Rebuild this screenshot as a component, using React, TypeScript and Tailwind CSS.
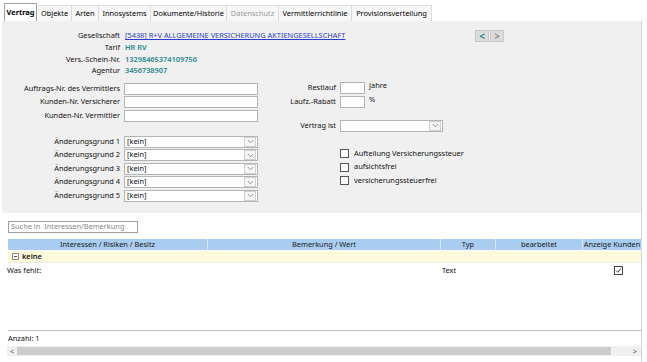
import React from "react";

const tabs = [
  { t: "Vertrag", w: 33, sel: true },
  { t: "Objekte", w: 34 },
  { t: "Arten", w: 27 },
  { t: "Innosystems", w: 52 },
  { t: "Dokumente/Historie", w: 76 },
  { t: "Datenschutz", w: 52, dis: true },
  { t: "Vermittlerrichtlinie", w: 73 },
  { t: "Provisionsverteilung", w: 80 },
];

const cols: [string, number][] = [
  ["Interessen / Risiken / Besitz", 200],
  ["Bemerkung / Wert", 233],
  ["Typ", 55],
  ["bearbeitet", 87],
  ["Anzeige Kunden", 59],
];

function Chevron() {
  return (
    <div className="w-[12px] h-[10px] border border-[#d0d0d0] bg-[#f6f6f6] flex items-center justify-center mr-[1px]">
      <svg width="7" height="5" viewBox="0 0 7 5">
        <path d="M0.8 1 L3.5 3.8 L6.2 1" fill="none" stroke="#8a8a8a" strokeWidth="0.9" />
      </svg>
    </div>
  );
}

function Select({ w, value }: { w: number; value?: string }) {
  return (
    <div
      className="h-[12px] bg-white border border-[#b4b4b4] flex items-center justify-between"
      style={{ width: w }}
    >
      <span className="pl-[2px] leading-none">{value ?? ""}</span>
      <Chevron />
    </div>
  );
}

function Input({ w }: { w: number }) {
  return <div className="h-[12px] bg-white border border-[#b4b4b4]" style={{ width: w }} />;
}

function Check() {
  return <div className="w-[9px] h-[9px] border border-[#555] bg-white shrink-0" />;
}

export default function App() {
  return (
    <div
      className="w-[647px] h-[362px] bg-white overflow-hidden text-[7.4px] text-[#111] leading-none"
      style={{ fontFamily: '"Noto Sans", "Open Sans", sans-serif' }}
    >
      {/* Tabs */}
      <div className="flex pl-[4px] pt-[3px] h-[21px] items-end">
        {tabs.map((tb) => (
          <div
            key={tb.t}
            className={
              tb.sel
                ? "h-[18px] bg-white border border-[#a0a0a0] border-b-0 flex items-center justify-center font-bold text-black mr-[1px] whitespace-nowrap"
                : "h-[16px] bg-[#f7f7f7] border-r border-t border-[#dcdcdc] flex items-center justify-center whitespace-nowrap " +
                  (tb.dis ? "text-[#9a9a9a]" : "text-black")
            }
            style={{ width: tb.w }}
          >
            {tb.t}
          </div>
        ))}
      </div>

      <div className="mx-[2px] w-[640px] border-r border-[#d4d4d4] h-[341px] flex flex-col">
        {/* Gray form panel */}
        <div className="bg-[#f0f0f0] h-[192px] shrink-0 flex flex-col pt-[9px]">
          <div className="flex">
            <div className="flex flex-col gap-[0.5px] w-[470px]">
              {[
                ["Gesellschaft", "link"],
                ["Tarif", "HR RV"],
                ["Vers.-Schein-Nr.", "13298465374109756"],
                ["Agentur", "3456738907"],
              ].map(([l, v]) => (
                <div key={l} className="flex items-center h-[11.3px]">
                  <div className="w-[118px] text-right">{l}</div>
                  <div className="ml-[5px]">
                    {v === "link" ? (
                      <span className="text-[#2a3ccf] underline">
                        [5438] R+V ALLGEMEINE VERSICHERUNG AKTIENGESELLSCHAFT
                      </span>
                    ) : (
                      <span className="text-[#1f8a8f] font-semibold">{v}</span>
                    )}
                  </div>
                </div>
              ))}
            </div>
            <div className="flex gap-[1px] ml-[3px]">
              <div className="w-[14px] h-[12px] bg-[#dcdcdc] border border-[#c8c8c8] flex items-center justify-center text-[#1d8a8a] font-bold text-[10px]">
                &lt;
              </div>
              <div className="w-[14px] h-[12px] bg-[#dcdcdc] border border-[#c8c8c8] flex items-center justify-center text-[#8a8a8a] font-bold text-[10px]">
                &gt;
              </div>
            </div>
          </div>

          <div className="flex mt-[6px]">
            {/* left column */}
            <div className="flex flex-col w-[278px]">
              <div className="flex flex-col gap-[1.5px]">
                {["Auftrags-Nr. des Vermittlers", "Kunden-Nr. Versicherer", "Kunden-Nr. Vermittler"].map((l) => (
                  <div key={l} className="flex items-center h-[12px]">
                    <div className="w-[118px] text-right">{l}</div>
                    <div className="ml-[4px]">
                      <Input w={134} />
                    </div>
                  </div>
                ))}
              </div>
              <div className="flex flex-col gap-[1.5px] mt-[14px]">
                {[1, 2, 3, 4, 5].map((n) => (
                  <div key={n} className="flex items-center h-[12px]">
                    <div className="w-[118px] text-right">Änderungsgrund {n}</div>
                    <div className="ml-[4px]">
                      <Select w={134} value="[kein]" />
                    </div>
                  </div>
                ))}
              </div>
            </div>
            {/* right column */}
            <div className="flex flex-col">
              <div className="flex flex-col gap-[2px] -mt-[1px]">
                {[
                  ["Restlauf", "Jahre"],
                  ["Laufz.-Rabatt", "%"],
                ].map(([l, s]) => (
                  <div key={l} className="flex items-center h-[12px]">
                    <div className="w-[56px] text-right">{l}</div>
                    <div className="ml-[4px]">
                      <Input w={25} />
                    </div>
                    <div className="ml-[4px] -mt-[3px]">{s}</div>
                  </div>
                ))}
              </div>
              <div className="flex items-center h-[12px] mt-[12px]">
                <div className="w-[56px] text-right">Vertrag ist</div>
                <div className="ml-[4px]">
                  <Select w={103} />
                </div>
              </div>
              <div className="flex flex-col gap-[3.5px] mt-[17px] ml-[60px]">
                {["Aufteilung Versicherungssteuer", "aufsichtsfrei", "versicherungssteuerfrei"].map((l) => (
                  <div key={l} className="flex items-center h-[10px] gap-[5px]">
                    <Check />
                    <span>{l}</span>
                  </div>
                ))}
              </div>
            </div>
          </div>
        </div>

        {/* White list area */}
        <div className="flex-1 flex flex-col bg-white">
          <div className="mt-[8px] ml-[6px] w-[130px] h-[12px] border border-[#a0a0a0] flex items-center pl-[2px] text-[#8a8a8a] shrink-0">
            Suche in&nbsp; Interessen/Bemerkung
          </div>
          <div className="mt-[6px] ml-[6px] flex flex-col border-b border-[#bdbdbd] h-[92px] shrink-0">
            <div className="flex h-[11px] bg-[#a9cdf0] shrink-0">
              {cols.map(([t, w]) => (
                <div
                  key={t}
                  className="h-full shrink-0 flex items-center justify-center border-r border-[#d8e8f8] whitespace-nowrap overflow-hidden text-[#1a1a1a]"
                  style={{ width: w }}
                >
                  {t}
                </div>
              ))}
            </div>
            <div className="flex items-center h-[12px] bg-[#fefbdc] mt-[1px] pl-[4px] gap-[3px] border-b border-[#eeeee0] shrink-0">
              <div className="w-[7px] h-[7px] border border-[#8a8a8a] flex items-center justify-center bg-white">
                <div className="w-[3px] h-[1px] bg-[#555]" />
              </div>
              <span className="font-semibold">keine</span>
            </div>
            <div className="flex items-center h-[13px] mt-[1px] shrink-0">
              <div className="shrink-0 -ml-[1px]" style={{ width: 200 }}>Was fehlt:</div>
              <div className="shrink-0" style={{ width: 233 }} />
              <div className="shrink-0 pl-[2px]" style={{ width: 55 }}>Text</div>
              <div className="shrink-0" style={{ width: 87 }} />
              <div className="shrink-0 flex justify-center pl-[14px]" style={{ width: 58 }}>
                <svg width="9" height="9" viewBox="0 0 9 9">
                  <rect x="0.5" y="0.5" width="8" height="8" fill="white" stroke="#444" />
                  <path d="M2 4.5 L3.8 6.3 L7 2.5" fill="none" stroke="#222" strokeWidth="0.9" />
                </svg>
              </div>
            </div>
          </div>
          <div className="ml-[6px] mt-[4px]">Anzahl: 1</div>
          <div className="ml-[5px] mt-[4px] h-[10px] flex items-center bg-[#f0f0f0] shrink-0">
            <div className="w-[10px] text-center text-[#555]">&lt;</div>
            <div className="w-[594px] h-[8px] bg-[#cdcdcd]" />
            <div className="flex-1 text-right pr-[4px] text-[#555]">&gt;</div>
          </div>
        </div>
      </div>
    </div>
  );
}
